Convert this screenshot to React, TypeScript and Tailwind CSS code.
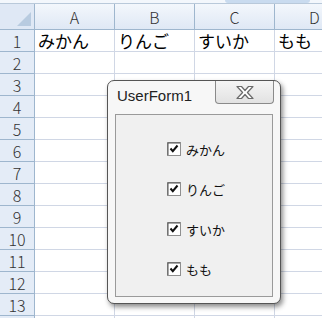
import React from "react";

const cols = ["A", "B", "C", "D"];
const fruits = ["みかん", "りんご", "すいか", "もも"];
const rows = Array.from({ length: 13 }, (_, i) => i + 1);

const jp = { fontFamily: '"Noto Sans CJK JP", "Liberation Sans", sans-serif' };

const CheckBox = () => (
  <svg width="14" height="14" viewBox="0 0 14 14" className="shrink-0">
    <rect x="0.5" y="0.5" width="13" height="13" fill="#fff" stroke="#8f8f8f" />
    <path d="M1 13V1h12" fill="none" stroke="#555" strokeWidth="1" />
    <path d="M3.5 6.5l2.3 2.6 4.7-5.6" fill="none" stroke="#111" strokeWidth="2" />
  </svg>
);

const App = () => {
  return (
    <div className="relative w-[322px] h-[318px] overflow-hidden bg-white" style={jp}>
      {/* 上の細い帯 */}
      <div className="flex h-[4px] border-b border-[#b9c9da] bg-[#f3f7fc]">
        <div className="w-[225px]" />
        <div className="w-[85px] rounded-b-md bg-[#c9dbef]" />
      </div>

      {/* 列見出し */}
      <div className="flex h-[26px] bg-gradient-to-b from-[#f3f7fc] to-[#dfe8f5] border-b border-[#9eb6ce] text-[16px] text-[#333] font-light">
        <div className="relative w-[35px] shrink-0 border-r border-[#9eb6ce] bg-[#dfe8f5]">
          <div className="absolute right-[3px] bottom-[3px] w-0 h-0 border-l-[14px] border-l-transparent border-b-[14px] border-b-[#b8cbe0]" />
        </div>
        {cols.map((c) => (
          <div key={c} className="w-[80px] shrink-0 border-r border-[#9eb6ce] flex items-center justify-center leading-none">
            {c}
          </div>
        ))}
      </div>

      {/* 行 */}
      {rows.map((r) => (
        <div key={r} className="flex h-[22px]">
          <div className="w-[35px] shrink-0 bg-[#e4ecf7] border-r border-b border-[#9eb6ce] flex items-center justify-center text-[16px] text-[#333] font-light leading-none">
            {r}
          </div>
          {cols.map((c, i) => (
            <div key={c} className="w-[80px] shrink-0 border-r border-b border-[#d0d7e5] flex items-center pl-[3px] text-[17px] leading-none text-black whitespace-nowrap">
              {r === 1 ? fruits[i] : ""}
            </div>
          ))}
        </div>
      ))}
      <div className="flex h-[22px]">
        <div className="w-[35px] shrink-0 bg-[#e4ecf7] border-r border-[#9eb6ce]" />
        {cols.map((c) => (
          <div key={c} className="w-[80px] shrink-0 border-r border-[#d0d7e5]" />
        ))}
      </div>

      {/* UserForm1 */}
      <div className="absolute left-[107px] top-[80px] w-[174px] h-[224px] rounded-[7px] border border-[#555] bg-[#f7f7f7] shadow-[2px_3px_5px_rgba(0,0,0,0.45)] flex flex-col">
        <div className="flex h-[33px] items-start">
          <div className="pl-[9px] pt-[7px] text-[15px] text-[#222] leading-none" style={{ fontFamily: '"Liberation Sans", Arial, sans-serif' }}>
            UserForm1
          </div>
          <div className="ml-auto mr-[6px] w-[59px] h-[23px] rounded-b-[4px] border border-t-0 border-[#8a8a8a] bg-gradient-to-b from-[#f5f5f5] to-[#e2e2e2] flex items-center justify-center">
            <svg width="20" height="15" viewBox="0 0 20 15">
              <path
                d="M2 1.5h4.5l3.5 4 3.5-4H18l-5.6 6 5.6 6h-4.5l-3.5-4-3.5 4H2l5.6-6z"
                fill="#fff"
                stroke="#6b6b6b"
                strokeWidth="1.2"
                strokeLinejoin="round"
              />
            </svg>
          </div>
        </div>
        <div className="mx-[7px] mb-[6px] flex-1 border border-[#9a9a9a] bg-[#f0f0f0] flex flex-col items-start pl-[51px] pt-[27px] gap-[26px]">
          {fruits.map((f) => (
            <div key={f} className="flex items-center gap-[5px] h-[14px] text-[13px] text-[#111] leading-none">
              <CheckBox />
              <span>{f}</span>
            </div>
          ))}
        </div>
      </div>
    </div>
  );
};

export default App;
